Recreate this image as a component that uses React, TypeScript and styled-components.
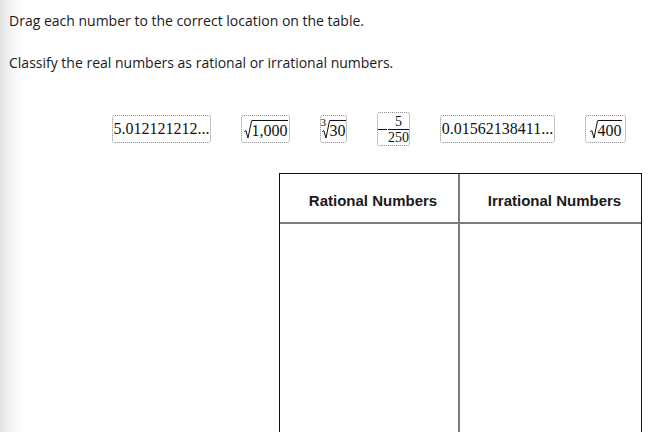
import React from "react";
import styled, { createGlobalStyle } from "styled-components";

const GlobalStyle = createGlobalStyle`
  html, body { margin: 0; padding: 0; background: #fff; }
  body { font-family: "Open Sans", "Liberation Sans", sans-serif; }
`;

const Page = styled.div`
  box-sizing: border-box;
  width: 657px;
  height: 432px;
  overflow: hidden;
  padding: 11px 0 0 9px;
  background: linear-gradient(to right, #e2e2e2 0px, #f6f6f6 12px, #ffffff 26px);
`;

const Instruction = styled.p<{ $gap?: number }>`
  margin: ${(p) => p.$gap ?? 0}px 0 0 0;
  font-size: 14px;
  line-height: 20px;
  color: #1a1a1a;
`;

const TileRow = styled.div`
  display: flex;
  align-items: center;
  gap: 30px;
  margin-top: 39px;
  padding-left: 103px;
  height: 34px;
`;

const Tile = styled.div<{ $w: number; $h?: number }>`
  box-sizing: border-box;
  width: ${(p) => p.$w}px;
  height: ${(p) => p.$h ?? 28}px;
  border: 1px dotted #8a8a8a;
  border-radius: 3px;
  background: #fff;
  display: flex;
  align-items: center;
  justify-content: center;
  font-family: "Liberation Serif", "DejaVu Serif", serif;
  font-size: 16px;
  color: #111;
  white-space: nowrap;
`;

const Root = styled.span`
  display: inline-flex;
  align-items: stretch;
  position: relative;
`;

const Radicand = styled.span`
  border-top: 1px solid #111;
  line-height: 17px;
  padding: 1px 0 0 0;
`;

const Index = styled.span`
  position: absolute;
  left: -1px;
  top: -3px;
  font-size: 11px;
  line-height: 11px;
`;

const RadicalSvg = styled.svg`
  display: block;
  flex: none;
`;

const Minus = styled.span`
  display: inline-block;
  width: 11px;
  height: 1px;
  background: #111;
  margin-right: 1px;
`;

const Fraction = styled.span`
  display: inline-flex;
  flex-direction: column;
  align-items: center;
  font-family: "Liberation Serif", "DejaVu Serif", serif;
  font-size: 14px;
  line-height: 13px;
`;

const FracTop = styled.span`
  padding: 0 1px 1px;
  border-bottom: 1px solid #111;
  align-self: stretch;
  text-align: center;
`;

const FracBottom = styled.span`
  padding-top: 1px;
`;

const Table = styled.div`
  box-sizing: border-box;
  margin: 27px 0 0 270px;
  width: 363px;
  height: 300px;
  border: 1px solid #111;
  border-bottom: none;
  display: grid;
  grid-template-columns: 180px 1fr;
  grid-template-rows: 50px 1fr;
`;

const HeaderCell = styled.div<{ $divider?: boolean }>`
  display: flex;
  align-items: center;
  justify-content: center;
  padding: 4px 0 0 8px;
  font-family: "Liberation Sans", Arial, sans-serif;
  font-weight: bold;
  font-size: 15px;
  color: #1a1a1a;
  border-bottom: 2px solid #7d7d7d;
  border-right: ${(p) => (p.$divider ? "2px solid #7d7d7d" : "none")};
`;

const BodyCell = styled.div<{ $divider?: boolean }>`
  border-right: ${(p) => (p.$divider ? "2px solid #7d7d7d" : "none")};
`;

function Radical({ h = 19 }: { h?: number }) {
  return (
    <RadicalSvg width={8} height={h} viewBox={`0 0 8 ${h}`}>
      <path
        d={`M0.3 ${h * 0.62} L1.8 ${h * 0.55} L4 ${h - 1} L7.6 0.5`}
        fill="none"
        stroke="#111"
        strokeWidth={1}
      />
    </RadicalSvg>
  );
}

export default function App() {
  return (
    <>
      <GlobalStyle />
      <Page>
        <Instruction>Drag each number to the correct location on the table.</Instruction>
        <Instruction $gap={22}>Classify the real numbers as rational or irrational numbers.</Instruction>
        <TileRow>
          <Tile $w={99}>5.012121212...</Tile>
          <Tile $w={49}>
            <Root>
              <Radical />
              <Radicand>1,000</Radicand>
            </Root>
          </Tile>
          <Tile $w={27}>
            <Root>
              <Index>3</Index>
              <Radical />
              <Radicand>30</Radicand>
            </Root>
          </Tile>
          <Tile $w={33} $h={34}>
            <Minus />
            <Fraction>
              <FracTop>5</FracTop>
              <FracBottom>250</FracBottom>
            </Fraction>
          </Tile>
          <Tile $w={115}>0.01562138411...</Tile>
          <Tile $w={41}>
            <Root>
              <Radical />
              <Radicand>400</Radicand>
            </Root>
          </Tile>
        </TileRow>
        <Table>
          <HeaderCell $divider>Rational Numbers</HeaderCell>
          <HeaderCell>Irrational Numbers</HeaderCell>
          <BodyCell $divider />
          <BodyCell />
        </Table>
      </Page>
    </>
  );
}
